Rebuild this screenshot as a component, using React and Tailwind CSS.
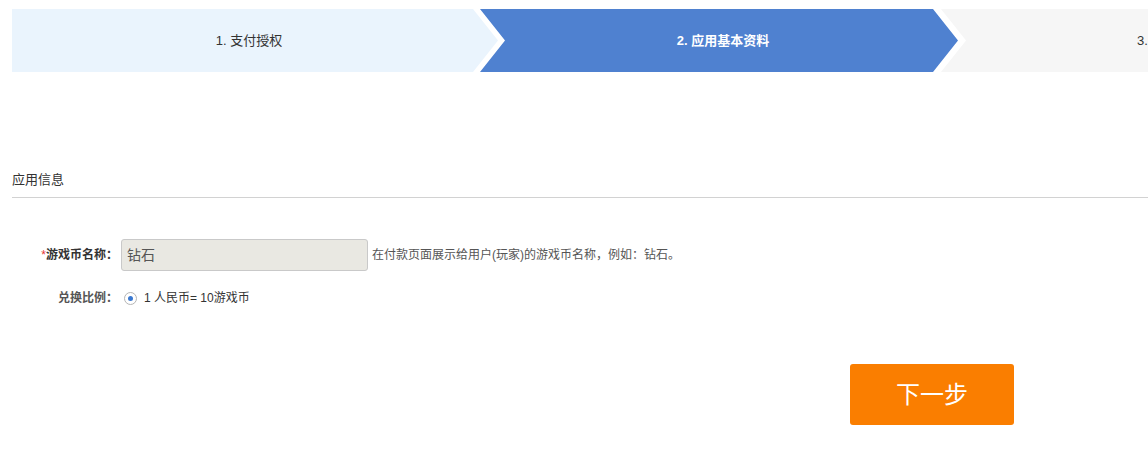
import React from "react";

const font = { fontFamily: '"Liberation Sans", Arial, "Noto Sans CJK SC", sans-serif' };

function Steps() {
  return (
    <div className="flex h-[63px] ml-3 mt-[9px] w-[1500px]">
      <div className="w-[486px] shrink-0 bg-[#eaf4fd] [clip-path:polygon(0_0,461px_0,100%_50%,461px_100%,0_100%)] flex items-center justify-center pr-[12px] text-[13px] text-[#333]">
        1. 支付授权
      </div>
      <div className="w-[478px] shrink-0 -ml-[18px] bg-[#4f81d0] [clip-path:polygon(0_0,453px_0,100%_50%,453px_100%,0_100%,25px_50%)] flex items-center justify-center pl-[8px] text-[13px] font-bold text-white">
        2. 应用基本资料
      </div>
      <div className="w-[478px] shrink-0 -ml-[17px] bg-[#f6f6f6] [clip-path:polygon(0_0,100%_0,100%_100%,0_100%,25px_50%)] flex items-center pl-[196px] text-[13px] text-[#333]">
        3. 完成
      </div>
    </div>
  );
}

export default function App() {
  return (
    <div className="w-[1148px] h-[456px] overflow-hidden bg-white" style={font}>
      <Steps />

      <div className="mt-[99px] ml-3">
        <div className="text-[13px] text-[#333] leading-[18px]">应用信息</div>
        <div className="mt-[8px] border-t border-[#d2d2d2]" />
      </div>

      <div className="mt-[41px]">
        <div className="flex items-center h-[32px]">
          <div className="w-[118px] text-right text-[12px] font-bold text-[#333]">
            <span className="text-[#e53333] font-normal">*</span>游戏币名称：
          </div>
          <div className="ml-[3px] w-[247px] h-[32px] bg-[#e9e8e2] border border-[#c9c9c9] rounded-[3px] flex items-center px-[5px] text-[14px] text-[#555]">
            钻石
          </div>
          <div className="ml-[4px] text-[12px] text-[#555]">在付款页面展示给用户(玩家)的游戏币名称，例如：钻石。</div>
        </div>

        <div className="flex items-center h-[20px] mt-[17px]">
          <div className="w-[118px] text-right text-[12px] font-bold text-[#555]">兑换比例：</div>
          <div className="ml-[6px] w-[13px] h-[13px] rounded-full border border-[#b5b5b5] bg-white flex items-center justify-center">
            <div className="w-[5px] h-[5px] rounded-full bg-[#3a78d0]" />
          </div>
          <div className="ml-[7px] text-[12px] text-[#333]">1 人民币= 10游戏币</div>
        </div>
      </div>

      <div className="flex mt-[56px] pl-[850px]">
        <button className="w-[164px] h-[61px] bg-[#fa7e00] rounded-[3px] text-white text-[24px] flex items-center justify-center">
          下一步
        </button>
      </div>
    </div>
  );
}
